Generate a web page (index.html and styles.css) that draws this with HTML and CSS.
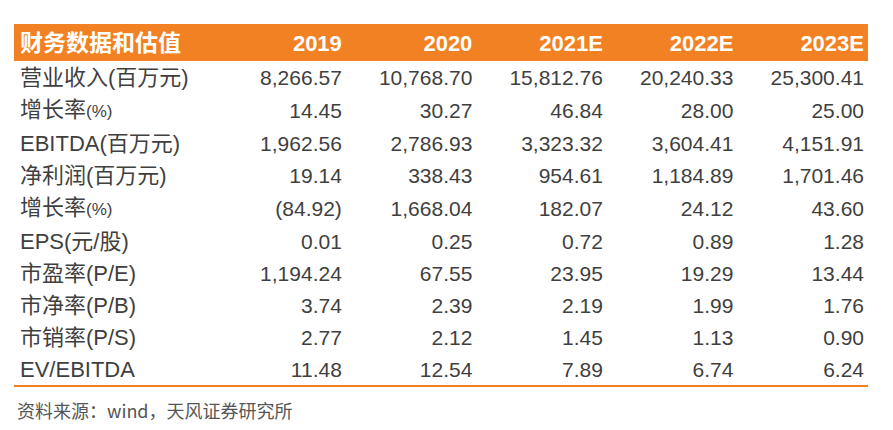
FILE: index.html
```html
<!DOCTYPE html>
<html lang="zh-CN">
<head>
<meta charset="utf-8">
<title>财务数据和估值</title>
<link rel="stylesheet" href="styles.css">
</head>
<body>
<div class="sheet">
  <table class="fin">
    <thead>
      <tr class="head">
        <th class="label">财务数据和估值</th>
        <th>2019</th><th>2020</th><th>2021E</th><th>2022E</th><th>2023E</th>
      </tr>
    </thead>
    <tbody>
      <tr><td class="label">营业收入(百万元)</td><td>8,266.57</td><td>10,768.70</td><td>15,812.76</td><td>20,240.33</td><td>25,300.41</td></tr>
      <tr><td class="label">增长率<span class="pct">(%)</span></td><td>14.45</td><td>30.27</td><td>46.84</td><td>28.00</td><td>25.00</td></tr>
      <tr><td class="label">EBITDA(百万元)</td><td>1,962.56</td><td>2,786.93</td><td>3,323.32</td><td>3,604.41</td><td>4,151.91</td></tr>
      <tr><td class="label">净利润(百万元)</td><td>19.14</td><td>338.43</td><td>954.61</td><td>1,184.89</td><td>1,701.46</td></tr>
      <tr><td class="label">增长率<span class="pct">(%)</span></td><td>(84.92)</td><td>1,668.04</td><td>182.07</td><td>24.12</td><td>43.60</td></tr>
      <tr><td class="label">EPS(元/股)</td><td>0.01</td><td>0.25</td><td>0.72</td><td>0.89</td><td>1.28</td></tr>
      <tr><td class="label">市盈率(P/E)</td><td>1,194.24</td><td>67.55</td><td>23.95</td><td>19.29</td><td>13.44</td></tr>
      <tr><td class="label">市净率(P/B)</td><td>3.74</td><td>2.39</td><td>2.19</td><td>1.99</td><td>1.76</td></tr>
      <tr><td class="label">市销率(P/S)</td><td>2.77</td><td>2.12</td><td>1.45</td><td>1.13</td><td>0.90</td></tr>
      <tr><td class="label">EV/EBITDA</td><td>11.48</td><td>12.54</td><td>7.89</td><td>6.74</td><td>6.24</td></tr>
    </tbody>
  </table>
  <p class="source">资料来源：wind，天风证券研究所</p>
</div>
</body>
</html>
```

FILE: styles.css
```css
html, body {
  margin: 0;
  padding: 0;
  background: #ffffff;
}

.sheet {
  padding: 24px 0 0 14px;
  font-family: "Liberation Sans", "Noto Sans CJK SC", sans-serif;
  color: #3f3f3f;
}

.fin {
  width: 854px;
  border-collapse: collapse;
  table-layout: fixed;
  border-bottom: 2px solid #f28123;
}

.fin th,
.fin td {
  padding: 0 2px 0 0;
  text-align: right;
  white-space: nowrap;
  font-size: 21px;
  font-weight: normal;
  line-height: 30px;
}

.fin th:nth-child(1), .fin td:nth-child(1) { width: 191px; }
.fin th:nth-child(n+2), .fin td:nth-child(n+2) { width: 127px; }
.fin th:last-child, .fin td:last-child { padding-right: 4px; }

.head {
  background: #f28123;
  color: #ffffff;
  height: 37px;
}

.head th {
  font-weight: bold;
  font-size: 22px;
  line-height: 35px;
  padding-top: 2px;
}

.head th.label {
  font-size: 23px;
}

.fin tbody tr {
  height: 32px;
}

.fin tbody td {
  padding-top: 2px;
}

.fin .label {
  text-align: left;
  padding-left: 6px;
  padding-right: 0;
}

.fin tbody td.label {
  font-size: 22px;
}

.pct {
  font-size: 17px;
}

.source {
  margin: 11px 0 0 3px;
  font-size: 18px;
  line-height: 24px;
  color: #555555;
  font-family: "Noto Sans CJK SC", "Liberation Sans", sans-serif;
}
```
